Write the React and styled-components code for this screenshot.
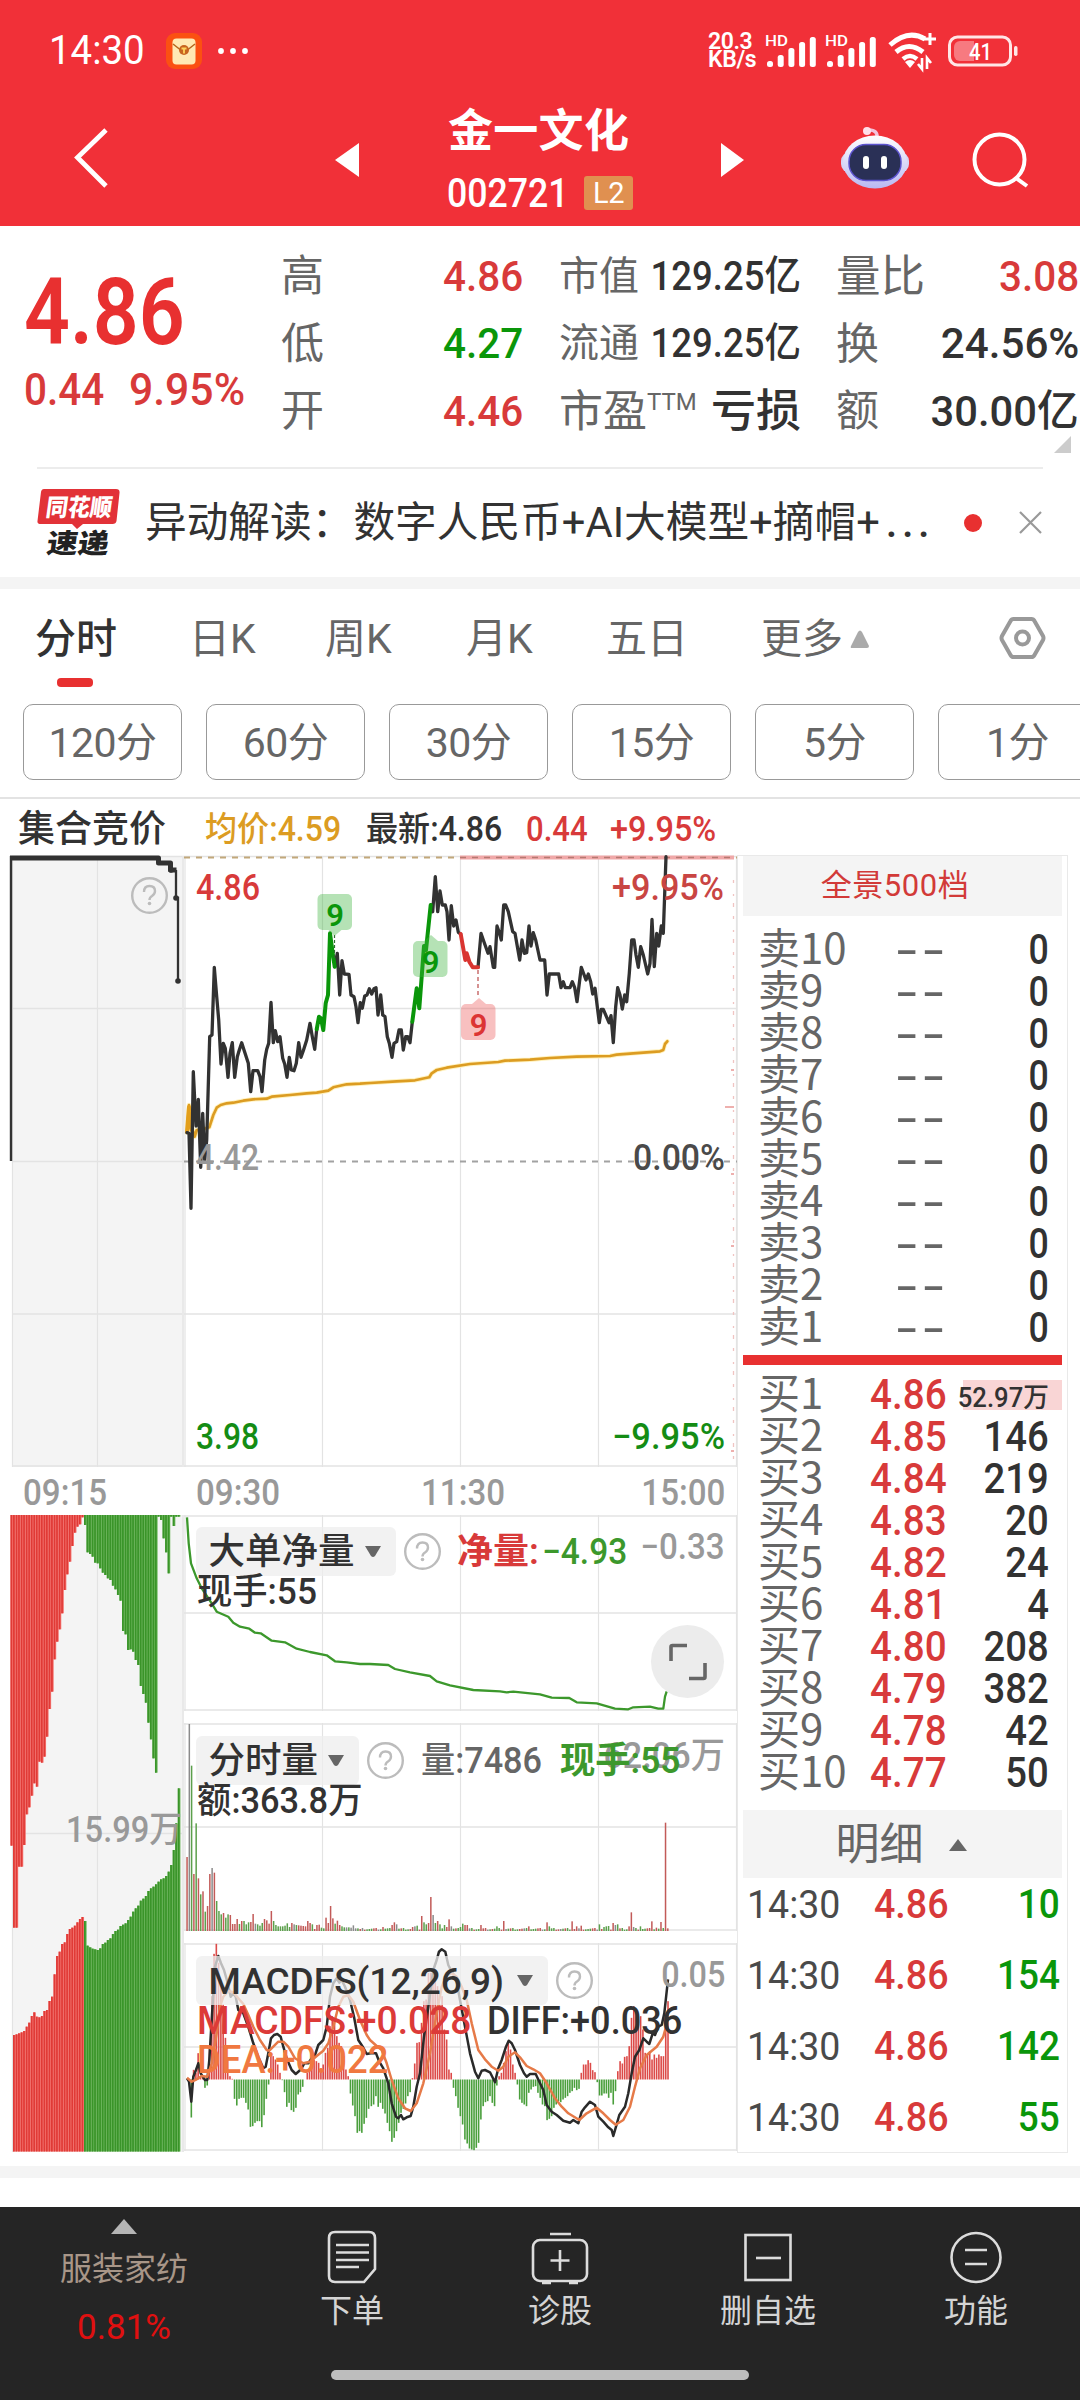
import React from "react";
import styled, { createGlobalStyle, css } from "styled-components";

const RED = "#e83030";
const SOFT_RED = "#d83a3a";
const GREEN = "#0a960a";
const LEAF = "#3c982c";
const INK = "#323232";
const GREY = "#666";
const PALE = "#999";
const GRID = "#e3e3e3";
const SANS = `Roboto, "Noto Sans CJK SC", sans-serif`;
const CJK = `"Noto Sans CJK SC", sans-serif`;

const Global = createGlobalStyle`
  * { box-sizing: border-box; }
  body { margin: 0; background: #fff; font-family: ${SANS}; }
  svg { display: block; flex: none; overflow: visible; }
  svg text { font-family: ${SANS}; }
`;

const Page = styled.div`
  width: 1080px;
  height: 2400px;
  overflow: hidden;
  display: flex;
  flex-direction: column;
  background: #fff;
  color: ${INK};
`;

const Txt = styled.span`
  display: block;
  white-space: nowrap;
  line-height: 1;
  font-size: ${(p) => p.$size || 42}px;
  font-weight: ${(p) => p.$w || 400};
  color: ${(p) => p.$c || "inherit"};
  letter-spacing: ${(p) => p.$ls || 0}px;
  ${(p) =>
    p.$sx &&
    css`
      transform: scaleX(${p.$sx});
      transform-origin: ${p.$from || "left"} center;
    `}
`;

/* ---------- status bar + title bar ---------- */
const Header = styled.header`
  height: 226px;
  background: #f13038;
  color: #fff;
  display: flex;
  flex-direction: column;
`;
const StatusBar = styled.div`
  height: 102px;
  padding: 0 60px 0 49px;
  display: flex;
  align-items: center;
  justify-content: space-between;
`;
const StatusSide = styled.div`
  display: flex;
  align-items: center;
  gap: ${(p) => p.$gap}px;
`;
const Speed = styled.div`
  width: 47px;
  font-size: 23px;
  font-weight: 600;
  line-height: 18.5px;
  letter-spacing: -0.4px;
`;
const TitleBar = styled.div`
  height: 124px;
  display: grid;
  grid-template-columns: 335px 410px 335px;
  align-items: start;
`;
const TitleMid = styled.div`
  display: flex;
  justify-content: space-between;
  align-items: flex-start;
`;
const Names = styled.div`
  display: flex;
  flex-direction: column;
  align-items: flex-start;
  width: 186px;
`;
const CodeRow = styled.div`
  display: flex;
  align-items: center;
  margin-top: 22px;
  height: 34px;
  width: 186px;
  justify-content: space-between;
`;
const CodeBox = styled.div`
  width: 122px;
`;
const L2 = styled.span`
  width: 49px;
  height: 34px;
  border-radius: 3px;
  background: #e09050;
  display: flex;
  align-items: center;
  justify-content: center;
  font-size: 29px;
  letter-spacing: -0.5px;
`;
const IconSlot = styled.div`
  padding: ${(p) => p.$p};
  display: flex;
`;

function Signal() {
  return (
    <svg width="50" height="34" viewBox="0 0 50 34" fill="#fff">
      <text x="-1" y="11.500" fontSize="15.5" fontWeight="500" textLength="23" lengthAdjust="spacingAndGlyphs">HD</text>
      {[6, 12, 19, 25, 30].map((h, i) => (
        <rect key={i} x={1 + i * 10.7} y={33 - h} width="6" height={h} rx="2.5" />
      ))}
    </svg>
  );
}

function Status() {
  return (
    <StatusBar>
      <StatusSide $gap={17}>
        <Txt $size={40} $sx={0.96}>14:30</Txt>
        <svg width="36" height="36" viewBox="0 0 36 36">
          <rect width="36" height="36" rx="9" fill="#fb5012" />
          <rect x="6.5" y="5.5" width="23" height="26" rx="4" fill="#ffe9b4" />
          <path d="M7 11l7 5.500M29 11l-7 5.500" stroke="#b5651d" strokeWidth="1.500" fill="none" />
          <circle cx="18" cy="17" r="5" fill="#c8641e" />
          <path d="M15.500 15.500h5M18 15.500v5" stroke="#ffd35c" strokeWidth="1.800" />
        </svg>
        <svg width="34" height="8" viewBox="0 0 34 8" fill="#fff">
          <circle cx="2" cy="4" r="2.900" /><circle cx="14" cy="4" r="2.900" /><circle cx="26" cy="4" r="2.900" />
        </svg>
      </StatusSide>
      <StatusSide $gap={10.5}>
        <Speed>20.3<br />KB/s</Speed>
        <Signal />
        <Signal />
        <svg width="51" height="38" viewBox="0 0 51 38" fill="none" stroke="#fff">
          <path d="M3 13Q21-3 38 7" strokeWidth="5" />
          <path d="M9 20Q22 9 36 20" strokeWidth="5" />
          <path d="M16 27Q23 21 30 27" strokeWidth="4.500" />
          <path d="M18 30l5 6 5-6q-5-4-10 0z" fill="#fff" stroke="none" />
          <path d="M43 1v12M37 7h12" strokeWidth="3" />
          <path d="M35 26v11l-4-5M40 37V26l4 5" strokeWidth="2.600" />
        </svg>
        <svg width="72" height="32" viewBox="0 0 72 32">
          <rect x="1.500" y="2" width="61" height="28" rx="8" fill="none" stroke="#ffe6e6" strokeWidth="3" />
          <path d="M12 6h14v20H12a6 6 0 0 1-6-6v-8a6 6 0 0 1 6-6z" fill="#f77a80" />
          <rect x="66" y="11" width="3.500" height="10" rx="1.700" fill="#ffe6e6" />
          <text x="21" y="24.500" fontSize="24" fill="#fff" fontWeight="500" textLength="23" lengthAdjust="spacingAndGlyphs">41</text>
        </svg>
      </StatusSide>
    </StatusBar>
  );
}

const IconPair = styled.div`
  display: flex;
  padding: 24px 0 0 95px;
  gap: 61px;
`;

function Title() {
  return (
    <TitleBar>
      <IconSlot $p="25px 0 0 72px">
        <svg width="38" height="62" viewBox="0 0 38 62">
          <path d="M34 3L5.500 30.500 34 59" fill="none" stroke="#fff" strokeWidth="4.800" />
        </svg>
      </IconSlot>
      <TitleMid>
        <IconSlot $p="41px 0 0 0">
          <svg width="24" height="34" viewBox="0 0 24 34"><path d="M24 0v34L0 17z" fill="#fff" /></svg>
        </IconSlot>
        <Names>
          <IconSlot $p="7px 0 0 1px">
            <Txt $size={45} $w={600} $ls={0.3}>金一文化</Txt>
          </IconSlot>
          <CodeRow>
            <CodeBox><IconSlot $p="1px 0 0"><Txt $size={41} $w={500} $sx={0.87}>002721</Txt></IconSlot></CodeBox>
            <L2>L2</L2>
          </CodeRow>
        </Names>
        <IconSlot $p="41px 0 0 0">
          <svg width="24" height="34" viewBox="0 0 24 34"><path d="M0 0v34l23-17z" fill="#fff" /></svg>
        </IconSlot>
      </TitleMid>
      <IconPair>
        <svg width="70" height="64" viewBox="0 0 70 64">
          <defs>
            <linearGradient id="shell" x1="0" y1="0" x2="0" y2="1">
              <stop offset="0" stopColor="#fff" /><stop offset="1" stopColor="#b9b8f2" />
            </linearGradient>
          </defs>
          <path d="M37 12q1-8-8-8" fill="none" stroke="#f3c3dc" strokeWidth="3.500" />
          <circle cx="27" cy="5" r="4" fill="#ffdfe9" />
          <rect x="1" y="26" width="68" height="21" rx="9" fill="#d6d5f6" />
          <ellipse cx="35" cy="36" rx="32" ry="26.500" fill="url(#shell)" />
          <rect x="9" y="18.500" width="52" height="36" rx="17" fill="#2a3056" stroke="#5c53cf" strokeWidth="1.500" />
          <rect x="23" y="30" width="6" height="13" rx="3" fill="#fff" />
          <rect x="41" y="30" width="6" height="13" rx="3" fill="#fff" />
        </svg>
        <svg width="60" height="62" viewBox="0 0 60 62" fill="none" stroke="#fff" strokeWidth="4">
          <circle cx="28.500" cy="33.500" r="25" />
          <path d="M45 52l11 8" />
        </svg>
      </IconPair>
    </TitleBar>
  );
}

/* ---------- quote ---------- */
const Quote = styled.section`
  height: 241px;
  padding-left: 24px;
  display: grid;
  grid-template-columns: 257px 242px 36px 242px 35px 243px;
`;
const PriceBlock = styled.div`
  padding-top: 40px;
`;
const ChangeRow = styled.div`
  display: grid;
  grid-template-columns: 105px 130px;
  margin-top: 9px;
`;
const StatCol = styled.div`
  padding-top: 16px;
  grid-column: ${(p) => p.$col};
`;
const Stat = styled.div`
  height: 67.500px;
  display: flex;
  justify-content: space-between;
  align-items: center;
`;
const StatLabel = styled.div`
  display: flex;
  color: ${GREY};
  padding-top: 2px;
`;
const StatValue = styled.div`
  margin-left: -30px;
  padding-top: 1px;
`;
const Corner = styled.div`
  display: flex;
  justify-content: flex-end;
  padding-right: 8px;
  margin-top: -9px;
`;

function StatItem({ label, size = 43, sup, value, color = INK, w = 500, sx = 0.94, vs = 43 }) {
  return (
    <Stat>
      <StatLabel>
        <Txt $size={size}>{label}</Txt>
        {sup && <Txt $size={24}>{sup}</Txt>}
      </StatLabel>
      <StatValue><Txt $size={vs} $w={w} $c={color} $sx={sx} $from="right">{value}</Txt></StatValue>
    </Stat>
  );
}

/* ---------- news ---------- */
const News = styled.section`
  height: 110px;
  margin: 0 37px;
  border-top: 2px solid #ececec;
  display: flex;
  align-items: center;
`;
const NewsText = styled.div`
  width: 818px;
  padding-left: 24px;
  font-size: 41.700px;
  line-height: 60px;
  white-space: nowrap;
`;
const Dots = styled.span`
  letter-spacing: 4.500px;
  font-weight: 500;
  padding-left: 6px;
`;
const Band = styled.div`
  height: 12px;
  background: #f4f4f4;
`;

/* ---------- tabs ---------- */
const Tabs = styled.nav`
  height: 115px;
  display: grid;
  grid-template-columns: 154px 136px 141px 140px 155px 239px 44px;
  padding: 28px 0 0 35px;
  align-items: start;
`;
const Tab = styled.div`
  display: flex;
  flex-direction: column;
  gap: 17px;
  font-size: 41px;
  line-height: 44px;
  font-weight: ${(p) => (p.$on ? 500 : 400)};
  color: ${(p) => (p.$on ? INK : GREY)};
`;
const Underline = styled.div`
  width: 36px;
  height: 9px;
  border-radius: 4px;
  background: ${RED};
  margin-left: 22px;
`;
const More = styled.div`
  display: flex;
  align-items: center;
  gap: 7px;
`;
const Minutes = styled.div`
  height: 95px;
  padding-left: 23px;
  display: flex;
  gap: 24px;
  overflow: hidden;
  border-bottom: 2px solid ${GRID};
`;
const Minute = styled.button`
  flex: none;
  width: 159px;
  height: 76px;
  border: 1.500px solid #999;
  border-radius: 10px;
  background: #fff;
  color: ${GREY};
  font: 400 41px ${SANS};
  letter-spacing: -0.500px;
  padding: 0 0 6px;
`;

/* ---------- chart area ---------- */
const Info = styled.div`
  height: 54px;
  padding: 7px 0 0 18px;
  display: grid;
  grid-template-columns: 187px 161px 160px 84px 140px;
  align-items: center;
`;
const Body = styled.main`
  height: 1300px;
  display: grid;
  grid-template-columns: 184px 553px 331px;
  margin-bottom: 13px;
`;
const Column = styled.div`
  display: flex;
  flex-direction: column;
`;
const Axis = styled.div`
  height: 47px;
  padding: ${(p) => p.$p};
  display: grid;
  grid-template-columns: ${(p) => p.$cols || "1fr"};
  align-items: center;
  color: ${PALE};
`;
const AxisEnd = styled.div`
  justify-self: end;
`;
const Sub = styled.div`
  position: relative;
  height: ${(p) => p.$h}px;
  margin-bottom: 11px;
`;
const Legend = styled.div`
  position: absolute;
  inset: 12.500px 13px auto 12px;
`;
const LegendRow = styled.div`
  display: flex;
  align-items: center;
  height: 49px;
`;
const Picker = styled.div`
  height: 49px;
  width: ${(p) => p.$width}px;
  padding: 2px 15px 0 12.500px;
  border-radius: 6px;
  background: rgba(238, 238, 238, 0.75);
  display: flex;
  align-items: center;
  justify-content: space-between;
  margin-right: 8px;
`;
const PickerText = styled.div`
  width: ${(p) => p.$width || "auto"};
`;
const Slot = styled.div`
  width: ${(p) => p.$width}px;
  padding-top: 2px;
`;
const LegendLine = styled.div`
  display: flex;
  height: ${(p) => p.$h || 32}px;
  align-items: center;
  padding-left: 1px;
`;
const RightLabel = styled.div`
  position: absolute;
  right: 12px;
  top: ${(p) => p.$top}px;
`;
const Expand = styled.div`
  position: absolute;
  left: 467px;
  top: 111px;
  width: 73px;
  height: 73px;
  border-radius: 50%;
  background: #ececec;
  display: flex;
  align-items: center;
  justify-content: center;
`;

function Help() {
  return (
    <svg width="37" height="37" viewBox="0 0 37 37">
      <circle cx="18.500" cy="18.500" r="17.300" fill="none" stroke="#bcbcbc" strokeWidth="2.400" />
      <path d="M13 15.500q0-6 5.500-6t5.500 5q0 3-3 5-2.500 1.500-2.500 4" fill="none" stroke="#bcbcbc" strokeWidth="2.400" />
      <circle cx="18.500" cy="26.500" r="1.800" fill="#bcbcbc" />
    </svg>
  );
}
const Down = () => (
  <svg width="16" height="12" viewBox="0 0 16 12"><path d="M0 0h16l-6 10q-2 2-4 0z" fill="#666" /></svg>
);

/* Chart samples are stored in thirds of a pixel, relative to (ox, oy). */
const toPts = (s, ox, oy) =>
  s.trim().split(/\s+/).map((p) => {
    const [x, y] = p.split(",").map(Number);
    return `${(ox + x / 3).toFixed(1)},${(oy + y / 3).toFixed(1)}`;
  }).join(" ");
const a = (s) => toPts(s, 0, 840);
const b = (s) => toPts(s, 370, 840);

const PRICE_1 = a("561,878 567,880 573,1105 580,695 588,858 595,778 602,982 608,820 614,960 620,900 629,590 636,585 643,382 650,470 656,540 663,672 670,610 676,625 684,712 690,640 697,608 704,712 712,650 718,630 725,608 732,630 745,670 752,755 759,692 773,692 780,710 786,755 794,660 800,628 806,610 813,487 820,608 826,572 833,605 840,590 848,655 854,672 861,712 868,652 874,690 882,692 889,670 896,608 903,652 910,632 920,600 930,550 937,590 944,628 950,568");
const RISE_1 = a("950,568 957,530 963,535 970,570 977,490 984,465 990,280 998,340 1004,380");
const PRICE_2 = a("1004,380 1012,340 1019,465 1026,362 1033,402 1047,403 1053,465 1062,470 1068,500 1074,548 1081,488 1087,505 1094,468 1101,465 1108,446 1115,462 1122,446") + " " +
  b("18,443 24,525 32,465 38,525 45,530 52,590 58,610 66,652 72,610 80,605 87,570 94,570 100,630 107,590 113,590 120,608 127,545");
const RISE_2 = b("127,545 140,445 148,505 162,318 168,330 182,195");
const PRICE_3 = b("182,195 188,215 196,110 203,215 210,153 217,195 226,195 231,215 237,300 244,197 251,258 258,240 265,277 272,282");
const FALL = b("272,282 286,360 290,340 298,365 308,382 324,382");
const PRICE_4 = b("324,382 333,280 340,300 354,340 360,320 370,382 374,382 381,258 387,275 394,300 401,195 407,195 415,215 428,275 435,280 449,360 456,300 463,340 470,338 477,258 483,318 490,278 497,300 510,360 524,360 531,465 538,402 566,402 573,443 580,425 586,443 600,443 607,425 614,443 621,485 634,382 648,420 655,402 662,425 668,462 675,445 682,500 688,548 694,508 700,508 717,548 723,527 730,608 737,500 743,443 750,465 757,507 764,465 770,485 778,400 785,300 792,300 798,345 805,382 812,320 820,345 833,402 840,370 846,238 853,380 860,280 866,318 874,258 880,280 888,50");
const AVERAGE = a("561,878 567,795 572,850 584,890 590,870 600,870 628,862 640,825 650,803 662,795 680,790 700,788 730,782 760,778 800,776 815,770 870,765 920,760 950,758 985,752 1000,742 1040,733 1080,731") + " " +
  b("0,729 80,724 135,721 178,712 185,700 200,690 230,683 300,672 385,666 405,662 480,659 540,654 620,650 720,648 740,644 790,640 870,634 880,630 885,612 892,604");
const NET = toPts("561,352 566,430 573,490 590,535 605,565 622,590 635,610 650,635 685,650 700,668 720,680 748,686 765,698 782,700 815,722 855,727 890,746 930,756 980,766 1005,784 1040,787 1080,792", 0, 1400) + " " +
  toPts("0,552 55,555 75,567 120,577 180,588 200,604 240,616 310,630 390,634 410,637 430,635 510,643 545,653 598,654 620,667 680,670 735,686 775,688 790,682 840,680 865,686 880,686 885,650 890,634", 370, 1480);
const DIFF = toPts("561,895 567,905 574,965 580,890 588,870 595,850 602,880 615,900 622,900 628,840 640,640 645,560 655,528 663,550 672,570 682,605 692,650 700,640 707,650 715,690 730,700 745,740 760,790 775,830 790,865 797,860 805,820 813,775 822,765 832,762 842,770 850,800 862,840 875,870 887,882 895,875 903,868 913,850 925,850 935,835 945,825 955,795 970,780 980,740 990,650 1000,610 1010,595 1018,608 1025,600 1035,620 1050,660 1062,710 1075,780 1088,800 1100,822", 0, 1780) + " " +
  toPts("2,700 18,700 28,725 40,745 55,790 65,850 78,890 85,895 93,885 100,898 110,892 122,888 130,860 140,800 150,760 162,650 175,560 190,450 200,420 207,395 215,388 226,395 235,435 245,455 258,475 270,540 285,620 300,700 315,755 325,775 335,752 345,750 360,757 375,787 385,745 395,720 408,680 416,662 425,670 435,690 450,735 462,760 470,770 480,762 497,762 508,785 520,810 530,855 545,875 560,885 580,902 600,908 610,900 625,910 635,875 645,862 660,845 675,855 685,890 700,905 715,922 725,930 730,948 738,920 748,885 765,860 775,820 785,760 795,710 808,690 820,655 830,665 838,672 848,640 855,645 865,620 875,615 883,580 894,478", 370, 1820);
const DEA = toPts("561,893 575,905 590,898 605,888 622,890 635,850 650,760 660,680 670,650 685,633 700,637 715,655 730,672 745,705 760,740 780,780 800,810 808,812 820,800 835,785 850,785 865,800 885,835 910,850 930,845 950,828 970,812 985,790 1000,740 1015,680 1030,650 1045,645 1060,665 1080,720 1100,765", 0, 1780) + " " +
  toPts("0,660 20,678 35,690 50,730 65,780 85,835 105,865 122,873 140,850 160,790 180,700 200,580 215,500 230,465 245,460 260,470 275,500 290,540 305,610 325,690 345,718 365,740 385,752 400,740 415,710 435,697 450,712 470,738 490,748 510,760 530,790 555,835 575,860 595,880 628,900 650,880 680,863 700,880 720,900 737,914 760,900 780,860 795,800 810,745 830,705 860,680 880,650 894,598", 370, 1820);

const BID_RED = [1337, 1583, 1583, 1400, 1400, 1335, 1243, 1222, 1187, 1150, 1160, 1085, 1088, 1070, 1010, 927, 875, 778, 725, 688, 640, 570, 523, 485, 438, 398, 380, 373, 352];
const BID_GREEN = [375, 457, 462, 470, 488, 490, 505, 518, 525, 535, 540, 557, 568, 585, 602, 693, 703, 750, 748, 755, 780, 795, 858, 882, 908, 968, 1018, 1075, 1118, 350, 360, 415, 457, 520, 350, 378, 350, 350];
const MATCH_RED = [765, 763, 760, 757, 753, 740, 728, 708, 697, 710, 712, 708, 693, 690, 663, 650, 583, 528, 515, 492, 487, 462, 447, 443, 437, 427, 417, 411];
const MATCH_GREEN = [423, 497, 502, 506, 508, 510, 505, 492, 488, 480, 475, 462, 453, 449, 438, 434, 430, 420, 410, 395, 385, 377, 362, 356, 348, 333, 325, 320, 313, 305, 298, 295, 288, 275, 255, 210, 130, 25];

const MACD_A = [-5, -114, 29, 20, 79, 5, 8, -25, -18, 100, 250, 377, 407, 350, 300, 225, 125, 60, 10, 2, -58, -78, -58, -55, -55, -70, -90, -142, -140, -130, -125, -125, -143, -107, -58, -15, 80, 70, 60, 45, 20, -2, -38, -82, -70, -92, -97, -85, -45, -38, -22, 0, 20, 35, 50, 60, 55, 50, 30, 45, 80, 95, 160, 190, 180, 130, 110, 100, 70, 30, 10, -42, -78, -110, -160, -155, -160, -133, -115, -88];
const MACD_B = [-80, -75, -50, -82, -70, -88, -102, -130, -155, -187, -175, -155, -130, -100, -88, -72, -50, -38, 4, 48, 110, 112, 170, 235, 240, 320, 320, 330, 325, 280, 225, 250, 150, 120, 30, 20, -25, -50, -85, -110, -135, -180, -192, -207, -210, -212, -205, -190, -120, -80, -68, -65, -50, -70, -80, -18, 10, 20, 50, 85, 115, 90, 45, 20, -15, -60, -70, -75, -80, -40, -30, -22, -20, -40, -55, -75, -80, -122, -118, -110, -85, -75, -65, -68, -60, -55, -50, -40, -35, -25, -32, -28, 20, 45, 45, 58, 50, 28, 22, -8, -48, -48, -42, -42, -55, -40, -75, -35, 25, 55, 48, 68, 70, 100, 185, 220, 205, 180, 190, 150, 80, 75, 85, 60, 75, 65, 75, 70, 70, 160, 235];

const VOL_HEAD = [222, 621, 496, 171, 323, 158, 110, 119, 58, 75, 171, 189, 175, 90, 60, 50, 54, 40, 50, 48, 21, 21, 36, 21, 30, 30, 20, 26, 27, 51, 22, 20, 16, 24, 36, 32, 22, 60, 30, 18, 14, 14, 14, 16, 23, 12, 24, 20, 18, 17, 16, 15, 14, 30, 24, 20, 6, 18, 19, 10, 8, 40, 24, 75, 38, 22, 31, 18, 14, 11, 11, 11, 10, 17, 8, 8, 6];
const VOL_HUES = "rsgrgrgrgrrsrgggrggrrrrgrgggrrsgggrrrrggggggggrsgrrrrrrgrrrggrrrrgrrggsgsssgrs";
const VOL_PEAKS = { 86: 12, 90: 18, 91: 26, 92: 20, 99: 12, 100: 14, 101: 16, 103: 45, 104: 26, 105: 20, 106: 24, 107: 102, 108: 48, 109: 24, 110: 30, 111: 20, 113: 18, 114: 12, 115: 35, 116: 14, 120: 12, 121: 22, 122: 18, 123: 18, 129: 18, 136: 14, 139: 30, 150: 14, 158: 26, 159: 14, 169: 29, 171: 14, 173: 16, 181: 20, 183: 12, 184: 14, 185: 15, 187: 24, 188: 18, 189: 20, 194: 14, 195: 56, 196: 12, 199: 14, 204: 29, 206: 10, 208: 27, 210: 325, 211: 8 };
const HUE = { r: "#c25a58", g: "#5ca04c", s: "#8b8b8b" };
const VOLUME = Array.from({ length: 212 }, (_, i) => {
  const h = VOL_HEAD[i] ?? VOL_PEAKS[i] ?? 4 + ((i * 7) % 6);
  const peak = [103, 107, 129, 139, 169, 173, 195, 204, 208, 210].includes(i);
  const hue = VOL_HUES[i] ?? (peak ? "r" : "ggrgsgrr"[(i * 5) % 8]);
  return { x: 187 + i * 2.2785, h: h / 3, c: HUE[hue] };
});

function Bars({ values, x, edge, mode, color, light }) {
  return values.map((v, i) => {
    const bx = x + i * 2.535;
    const y = mode === "hang" ? edge : 1780 + v / 3;
    const h = mode === "hang" ? 1400 + v / 3 - edge : edge - y;
    return (
      <g key={i}>
        <rect x={bx} y={y} width="2.600" height={h} fill={light} />
        <rect x={bx} y={y} width="1.700" height={h} fill={color} />
      </g>
    );
  });
}

function Lines({ xs = [], ys = [], x0, x1, y0, y1 }) {
  return (
    <g stroke={GRID} strokeWidth="1.200">
      {xs.map((x) => <path key={x} d={`M${x} ${y0}V${y1}`} />)}
      {ys.map((y) => <path key={"h" + y} d={`M${x0} ${y}H${x1}`} strokeWidth="1.500" />)}
    </g>
  );
}

function AuctionTop() {
  return (
    <svg width="184" height="614" viewBox="0 853 184 614">
      <rect x="12" y="856" width="172" height="611" fill="#f4f4f4" />
      <Lines xs={[12.5, 97.5]} ys={[856.5, 1008.500, 1161.500, 1314, 1466]} x0={12} x1={184} y0={856} y1={1467} />
      <rect x="182" y="856" width="2" height="611" fill="#e9e9e9" />
      <path d="M11 856v305" stroke={INK} strokeWidth="2.400" />
      <path d="M10 858H158.500V863H170.500V870H176.500" fill="none" stroke={INK} strokeWidth="5" strokeLinejoin="round" />
      <path d="M176 870V898H178V981" fill="none" stroke={INK} strokeWidth="2.300" />
      {[[176, 898], [178, 981], [171, 870]].map(([x, y]) => <circle key={y} cx={x} cy={y} r="2.800" fill={INK} />)}
      <circle cx="149.500" cy="895.500" r="17.300" fill="none" stroke="#bcbcbc" strokeWidth="2.400" />
      <path d="M144 892q0-6 5.500-6t5.500 5q0 3-3 5-2.500 1.500-2.500 4" fill="none" stroke="#bcbcbc" strokeWidth="2.400" />
      <circle cx="149.500" cy="903.500" r="1.800" fill="#bcbcbc" />
    </svg>
  );
}

function AuctionBottom() {
  return (
    <svg width="184" height="638" viewBox="0 1514 184 638">
      <rect x="12" y="1515" width="172" height="637" fill="#f4f4f4" />
      <Lines xs={[12.5, 97.5]} ys={[1833.500]} x0={12} x1={184} y0={1515} y1={2152} />
      <rect x="182" y="1515" width="2" height="637" fill="#e9e9e9" />
      <Bars values={BID_RED} x={10.5} edge={1515} mode="hang" color="#e03a36" light="#f4716d" />
      <Bars values={BID_GREEN} x={84} edge={1515} mode="hang" color="#3a9429" light="#66b455" />
      <Bars values={MATCH_RED} x={13} edge={2151.500} mode="rise" color="#e03a36" light="#f4716d" />
      <Bars values={MATCH_GREEN} x={84} edge={2151.500} mode="rise" color="#3a9429" light="#66b455" />
      <text x="66" y="1842" fontSize="36" fontWeight="500" fill={PALE} textLength="116" lengthAdjust="spacingAndGlyphs">15.99万</text>
    </svg>
  );
}

function Flag({ x, y, up, color, bg }) {
  const tail = up ? `M${x + 11} ${y}l7-6 7 6z` : `M${x + 11} ${y + 36}l6 6 7-6z`;
  return (
    <g>
      <rect x={x} y={y} width="34.500" height="36" rx="5" fill={bg} />
      <path d={tail} fill={bg} />
      <text x={x + 17.500} y={y + 31.500} fontSize="31" fontWeight="600" fill={color} textAnchor="middle">9</text>
    </g>
  );
}

function PriceChart() {
  const label = { fontSize: 36, fontWeight: 500, lengthAdjust: "spacingAndGlyphs" };
  return (
    <svg width="553" height="614" viewBox="184 853 553 614">
      <Lines xs={[185, 322.500, 460.500, 598.500, 736.500]} ys={[856.500, 1008.500, 1314, 1466]} x0={184} x1={737} y0={856} y1={1467} />
      <path d="M184 857.500H737" stroke="#c1a77a" strokeWidth="1.800" strokeDasharray="6 6" />
      <path d="M460 857.500H734" stroke="#f0a8a8" strokeWidth="4" />
      <path d="M460 857.500H734" stroke="#b77972" strokeWidth="1.500" strokeDasharray="6 6" />
      <path d="M184 1161.500H737" stroke="#a2a2a2" strokeWidth="2" strokeDasharray="6 6" />
      <path d="M733.500 880V1465" stroke="#f0c4c2" strokeWidth="1.300" strokeDasharray="3 11 2 7 4 9" />
      <path d="M731 1070h3M725 1107h9M731 1174h3M731 1246h3M731 1451h3" stroke="#eeb0ae" strokeWidth="2" />
      <g fill="none" strokeLinejoin="round" strokeLinecap="round" strokeWidth="3.300">
        <polyline points={AVERAGE} stroke="#fff2bf" strokeWidth="4.500" />
        <polyline points={AVERAGE} stroke="#dc9c22" strokeWidth="2.700" />
        <path d="M187 1132L189 1107L191.500 1130" stroke="#e39f1c" strokeWidth="4" />
        {[PRICE_1, PRICE_2, PRICE_3, PRICE_4].map((p, i) => <polyline key={i} points={p} stroke={INK} />)}
        <polyline points={RISE_1} stroke={GREEN} strokeWidth="4" />
        <polyline points={RISE_2} stroke={GREEN} strokeWidth="4" />
        <polyline points={FALL} stroke="#d93430" strokeWidth="4" />
      </g>
      <path d="M334.500 935v24" stroke="#2e6c2e" strokeWidth="1.200" strokeDasharray="3 2" />
      <path d="M478 970v28" stroke="#c77" strokeWidth="1.600" strokeDasharray="4 3" />
      <Flag x={317.500} y={894} color="#0a960a" bg="rgba(60,180,60,.38)" />
      <Flag x={413} y={941} up color="#0a960a" bg="rgba(60,180,60,.38)" />
      <Flag x={461} y={1004} up color="#dc3434" bg="rgba(235,80,80,.36)" />
      <text x="196" y="900" fill={SOFT_RED} textLength="64" {...label}>4.86</text>
      <text x="196" y="1170" fill={PALE} textLength="63" {...label}>4.42</text>
      <text x="196" y="1449" fill="#148c14" textLength="63" {...label}>3.98</text>
      <text x="612" y="900" fill="#c94543" textLength="112" {...label}>+9.95%</text>
      <text x="633" y="1170" fill="#4a4a4a" textLength="92" {...label}>0.00%</text>
      <text x="612" y="1449" fill="#148c14" textLength="113" {...label}>−9.95%</text>
    </svg>
  );
}

function NetChart() {
  return (
    <svg width="553" height="198" viewBox="184 1514 553 198">
      <Lines xs={[185, 322.500, 460.500, 598.500, 736.500]} ys={[1516, 1613, 1710]} x0={184} x1={737} y0={1515} y1={1711} />
      <polyline points={NET} fill="none" stroke={LEAF} strokeWidth="2.300" strokeLinejoin="round" />
    </svg>
  );
}
function VolumeChart() {
  return (
    <svg width="553" height="209" viewBox="184 1723 553 209">
      <Lines xs={[185, 322.500, 460.500, 598.500, 736.500]} ys={[1724, 1827, 1930]} x0={184} x1={737} y0={1723} y1={1931} />
      {VOLUME.map((v, i) => <rect key={i} x={v.x - 0.7} y={1931 - v.h} width="1.500" height={v.h} fill={v.c} />)}
    </svg>
  );
}
function MacdChart() {
  const bar = (v, x, key) => (
    <rect key={key} x={x - 0.75} y={v > 0 ? 2079.500 - v / 3 : 2079.500} width="1.600" height={Math.abs(v) / 3} fill={v > 0 ? "#dc4a48" : "#4a9f3c"} />
  );
  return (
    <svg width="553" height="209" viewBox="184 1943 553 209">
      <Lines xs={[185, 322.500, 460.500, 598.500, 736.500]} ys={[1944, 2047, 2150]} x0={184} x1={737} y0={1943} y1={2151} />
      {MACD_A.map((v, i) => bar(v, 189 + i * 2.2735, "a" + i))}
      {MACD_B.map((v, i) => bar(v, 371.300 + i * 2.282, "b" + i))}
      <polyline points={DIFF} fill="none" stroke="#2a2a2a" strokeWidth="2.500" strokeLinejoin="round" />
      <polyline points={DEA} fill="none" stroke="#e67a48" strokeWidth="2.500" strokeLinejoin="round" />
    </svg>
  );
}

/* ---------- order book ---------- */
const Book = styled.aside`
  margin-top: 2px;
  height: 1298px;
  border: 1.500px solid #e9e9e9;
  padding: 0 5px;
`;
const BookHead = styled.div`
  height: ${(p) => p.$h}px;
  background: #f4f4f4;
  display: flex;
  align-items: center;
  justify-content: center;
  gap: ${(p) => p.$space || 0}px;
  padding-bottom: ${(p) => p.$lift || 0}px;
  padding-top: ${(p) => p.$drop || 0}px;
  padding-right: ${(p) => p.$shiftBack || 0}px;
  margin-bottom: ${(p) => p.$gap || 0}px;
`;
const Level = styled.div`
  height: 42px;
  padding: 0 13px 0 15px;
  display: grid;
  grid-template-columns: 112px 78px minmax(0, 1fr);
  align-items: center;
`;
const LevelName = styled.span`
  font: 400 42px/40px ${CJK};
  color: ${GREY};
  white-space: nowrap;
  transform: translateY(-4px);
`;
const Dashes = styled.span`
  font: 400 50px/40px ${SANS};
  color: ${GREY};
  transform: scaleX(1.45);
  transform-origin: left center;
  padding-left: 18.500px;
  letter-spacing: 4.500px;
`;
const Amount = styled.div`
  display: flex;
  justify-content: flex-end;
`;
const BigAmount = styled.div`
  height: 30px;
  margin-right: -13px;
  margin-left: 15px;
  padding: 6px 13px 0 0;
  background: #f9d5d5;
  display: flex;
  align-items: center;
  justify-content: flex-end;
`;
const RedBar = styled.div`
  height: 10px;
  background: ${RED};
  margin: 6px 0 9px;
`;
const DetailGap = styled.div`
  height: 16px;
`;
const Tick = styled.div`
  height: 71px;
  display: grid;
  grid-template-columns: 127px 90px 1fr;
  align-items: center;
  padding: 0 2px 0 4px;
`;
const Ticks = styled.div`
  margin-top: -9px;
`;

const BUYS = [["4.86", "52.97万"], ["4.85", "146"], ["4.84", "219"], ["4.83", "20"], ["4.82", "24"], ["4.81", "4"], ["4.80", "208"], ["4.79", "382"], ["4.78", "42"], ["4.77", "50"]];

function OrderBook() {
  return (
    <Book>
      <BookHead $h={60} $gap={13} $lift={1} $shiftBack={15}><Txt $size={31} $c="#d23a38" $ls={0.5}>全景500档</Txt></BookHead>
      {[10, 9, 8, 7, 6, 5, 4, 3, 2, 1].map((n) => (
        <Level key={n}>
          <LevelName>卖{n}</LevelName>
          <Dashes>--</Dashes>
          <Amount><Txt $size={42} $w={500} $sx={0.85} $from="right">0</Txt></Amount>
        </Level>
      ))}
      <RedBar />
      {BUYS.map(([price, amount], i) => (
        <Level key={price}>
          <LevelName>买{i + 1}</LevelName>
          <Txt $size={42} $w={500} $c={SOFT_RED} $sx={0.92}>{price}</Txt>
          {i === 0 ? (
            <BigAmount><Txt $size={27} $w={500} $sx={0.95} $from="right">{amount}</Txt></BigAmount>
          ) : (
            <Amount><Txt $size={42} $w={500} $sx={0.91} $from="right">{amount}</Txt></Amount>
          )}
        </Level>
      ))}
      <DetailGap />
      <BookHead $h={68} $space={25} $drop={2} $shiftBack={3}>
        <Txt $size={44} $c={GREY}>明细</Txt>
        <svg width="18" height="13" viewBox="0 0 18 13"><path d="M0 12h18L9 0z" fill="#666" /></svg>
      </BookHead>
      <Ticks>
        {["10", "154", "142", "55"].map((n) => (
          <Tick key={n}>
            <Txt $size={39.5} $c="#4a4a4a" $sx={0.95}>14:30</Txt>
            <Txt $size={40} $w={500} $c={SOFT_RED} $sx={0.94}>4.86</Txt>
            <Amount><Txt $size={41} $w={500} $c={GREEN} $sx={0.9} $from="right">{n}</Txt></Amount>
          </Tick>
        ))}
      </Ticks>
    </Book>
  );
}

/* ---------- bottom bar ---------- */
const Bottom = styled.footer`
  height: 193px;
  margin-top: 29px;
  background: #252525;
  display: grid;
  grid-template-columns: 248px repeat(4, 208px);
  grid-template-rows: 163px 10px;
`;
const Sector = styled.div`
  display: flex;
  flex-direction: column;
  align-items: center;
  padding-top: 12px;
`;
const NavItem = styled.div`
  display: flex;
  flex-direction: column;
  align-items: center;
  padding-top: 21px;
  gap: 9px;
`;
const HomeBar = styled.div`
  grid-column: 1 / -1;
  justify-self: center;
  width: 418px;
  height: 10px;
  border-radius: 5px;
  background: #bdbdbd;
`;
const SectorName = styled.div`
  margin: 19px 0 25px;
`;
const icon = { width: 60, height: 58, viewBox: "0 0 60 58", fill: "none", stroke: "#dcdcdc", strokeWidth: 2.6 };
const NAV = [
  ["下单", <svg {...icon}><path d="M13 4h34q6 0 6 6v31L42 54H13q-6 0-6-6V10q0-6 6-6z" /><path d="M14 17h33M14 24.500h33M14 32h33M14 39h23" /></svg>],
  ["诊股", <svg {...icon}><rect x="3" y="12" width="54" height="41" rx="7" /><path d="M20 6h21M30 22v21M20.500 32.500h19M12 55h9M39 55h9" /></svg>],
  ["删自选", <svg {...icon}><rect x="7.500" y="7" width="45" height="45" /><path d="M18 30h25" /></svg>],
  ["功能", <svg {...icon}><circle cx="30" cy="29.500" r="24.500" /><path d="M19 22h22M19 36h22" /></svg>],
];

const Spacer = styled.div`
  width: ${(p) => p.$width}px;
`;

export default function App() {
  return (
    <Page>
      <Global />
      <Header>
        <Status />
        <Title />
      </Header>

      <Quote>
        <PriceBlock>
          <Txt $size={93} $w={600} $c={RED} $sx={0.865}>4.86</Txt>
          <ChangeRow>
            <Txt $size={44} $c={SOFT_RED} $w={500} $sx={0.92}>0.44</Txt>
            <Txt $size={44} $c={SOFT_RED} $w={500} $sx={0.97}>9.95%</Txt>
          </ChangeRow>
        </PriceBlock>
        <StatCol $col="2">
          <StatItem label="高" value="4.86" color={SOFT_RED} />
          <StatItem label="低" value="4.27" color={GREEN} />
          <StatItem label="开" value="4.46" color={SOFT_RED} />
        </StatCol>
        <StatCol $col="4">
          <StatItem label="市值" size={40} value="129.25亿" vs={41} sx={0.89} />
          <StatItem label="流通" size={40} value="129.25亿" vs={41} sx={0.89} />
          <StatItem label="市盈" size={44} sup="TTM" value="亏损" vs={45} sx={1} />
        </StatCol>
        <StatCol $col="6">
          <StatItem label="量比" size={44.5} value="3.08" color={SOFT_RED} />
          <StatItem label="换" value="24.56%" sx={0.98} />
          <StatItem label="额" value="30.00亿" sx={0.97} />
          <Corner><svg width="17" height="17" viewBox="0 0 17 17"><path d="M17 0v17H0z" fill="#ccc" /></svg></Corner>
        </StatCol>
      </Quote>

      <News>
        <svg width="84" height="70" viewBox="0 0 84 70">
          <path d="M7 1h72q4 0 3.500 4l-3 28q-.5 3-4 3H46l-6 5-5-5H4q-4 0-3.500-3L4 4q.5-3 3-3z" fill="#e23238" />
          <g fontWeight="900" transform="skewX(-8)">
            <text x="12" y="28" fontSize="24" fill="#fff" textLength="66" lengthAdjust="spacingAndGlyphs">同花顺</text>
            <text x="18" y="65" fontSize="27" fill="#222" textLength="62" lengthAdjust="spacingAndGlyphs">速递</text>
          </g>
        </svg>
        <NewsText>异动解读：数字人民币+AI大模型+摘帽+<Dots>...</Dots></NewsText>
        <svg width="104" height="26" viewBox="0 0 104 26">
          <circle cx="34" cy="13" r="9" fill={RED} />
          <path d="M81 2l21 21M102 2L81 23" stroke="#999" strokeWidth="2.200" />
        </svg>
      </News>
      <Band />

      <Tabs>
        <Tab $on>分时<Underline /></Tab>
        <Tab>日K</Tab>
        <Tab>周K</Tab>
        <Tab>月K</Tab>
        <Tab>五日</Tab>
        <Tab>
          <More>更多<svg width="20" height="18" viewBox="0 0 20 18"><path d="M8 2q2-3 4 0l7 14q0 2-2 2H2q-2 0-1-2z" fill="#aaa" /></svg></More>
        </Tab>
        <svg width="46" height="44" viewBox="0 0 46 44" fill="none" stroke="#999" strokeWidth="4">
          <path d="M13.500 2h18q2 0 3 2l8.500 15q1 2 0 4l-8.500 15q-1 2-3 2h-18q-2 0-3-2L2 23q-1-2 0-4L10.500 4q1-2 3-2z" />
          <circle cx="22.500" cy="21" r="6.500" />
        </svg>
      </Tabs>

      <Minutes>
        {["120分", "60分", "30分", "15分", "5分", "1分"].map((m) => <Minute key={m}>{m}</Minute>)}
      </Minutes>

      <Info>
        <Txt $size={37} $w={500}>集合竞价</Txt>
        <Txt $size={34.5} $w={500} $c="#dc9c22" $sx={0.93}>均价:4.59</Txt>
        <Txt $size={34.5} $w={500} $sx={0.93}>最新:4.86</Txt>
        <Txt $size={34.5} $c={SOFT_RED} $w={500} $sx={0.9}>0.44</Txt>
        <Txt $size={34.5} $c={SOFT_RED} $w={500} $sx={0.94}>+9.95%</Txt>
      </Info>

      <Body>
        <Column>
          <AuctionTop />
          <Axis $p="4px 0 0 23px"><Txt $size={36} $w={500} $sx={0.92}>09:15</Txt></Axis>
          <AuctionBottom />
        </Column>
        <Column>
          <PriceChart />
          <Axis $p="4px 12px 0 12px" $cols="225px 120px 1fr">
            <Txt $size={36} $w={500} $sx={0.92}>09:30</Txt>
            <Txt $size={36} $w={500} $sx={0.92}>11:30</Txt>
            <AxisEnd><Txt $size={36} $w={500} $sx={0.92} $from="right">15:00</Txt></AxisEnd>
          </Axis>
          <Sub $h={198}>
            <NetChart />
            <Legend>
              <LegendRow>
                <Picker $width={200}><Txt $size={36.5} $w={500}>大单净量</Txt><Down /></Picker>
                <Help />
                <Spacer $width={16} />
                <Slot $width={85}><Txt $size={36} $w={600} $c={SOFT_RED}>净量:</Txt></Slot>
                <Slot $width={90}><Txt $size={36} $w={500} $c={LEAF} $sx={0.93}>−4.93</Txt></Slot>
              </LegendRow>
              <LegendLine><Txt $size={36} $w={500} $sx={0.98}>现手:55</Txt></LegendLine>
            </Legend>
            <RightLabel $top={15}><Txt $size={36} $w={500} $c={PALE} $sx={0.92} $from="right">−0.33</Txt></RightLabel>
            <Expand>
              <svg width="38" height="38" viewBox="0 0 38 38" fill="none" stroke="#666" strokeWidth="3.600">
                <path d="M2 18V4q0-1.500 1.500-1.500H18M36 20v14q0 1.500-1.500 1.500H20" />
              </svg>
            </Expand>
          </Sub>
          <Sub $h={209}>
            <VolumeChart />
            <RightLabel $top={15}><Txt $size={36} $w={500} $c={PALE} $sx={0.95} $from="right">62.06万</Txt></RightLabel>
            <Legend>
              <LegendRow>
                <Picker $width={163}><Txt $size={36.500} $w={500}>分时量</Txt><Down /></Picker>
                <Help />
                <Spacer $width={17} />
                <Slot $width={139}><Txt $size={36} $w={500} $c={GREY} $sx={0.95}>量:7486</Txt></Slot>
                <Slot $width={130}><Txt $size={36} $w={600} $c={LEAF} $sx={0.98}>现手:55</Txt></Slot>
              </LegendRow>
              <LegendLine><Txt $size={36} $w={500} $sx={0.955}>额:363.8万</Txt></LegendLine>
            </Legend>
          </Sub>
          <Sub $h={209}>
            <MacdChart />
            <Legend>
              <LegendRow>
                <Picker $width={352}><PickerText $width="300px"><Txt $size={37} $w={500}>MACDFS(12,26,9)</Txt></PickerText><Down /></Picker>
                <Help />
              </LegendRow>
              <LegendLine $h={30}>
                <Slot $width={290}><Txt $size={38} $w={500} $c="#dc3a38" $sx={0.98}>MACDFS:+0.028</Txt></Slot>
                <Slot $width={200}><Txt $size={38} $w={500} $sx={0.95}>DIFF:+0.036</Txt></Slot>
              </LegendLine>
              <LegendLine $h={50}><Txt $size={38} $w={500} $c="#f07840" $sx={0.96}>DEA:+0.022</Txt></LegendLine>
            </Legend>
            <RightLabel $top={14}><Txt $size={36} $w={500} $c={PALE} $sx={0.9} $from="right">0.05</Txt></RightLabel>
          </Sub>
        </Column>
        <OrderBook />
      </Body>
      <Band />

      <Bottom>
        <Sector>
          <svg width="26" height="15" viewBox="0 0 26 15"><path d="M13 0l13 15H0z" fill="#b5b5b5" /></svg>
          <SectorName><Txt $size={32} $c="#a89688">服装家纺</Txt></SectorName>
          <Txt $size={35} $c="#e01010">0.81%</Txt>
        </Sector>
        {NAV.map(([name, drawing]) => (
          <NavItem key={name}>
            {drawing}
            <Txt $size={32} $c="#d4d4d4">{name}</Txt>
          </NavItem>
        ))}
        <HomeBar />
      </Bottom>
    </Page>
  );
}
